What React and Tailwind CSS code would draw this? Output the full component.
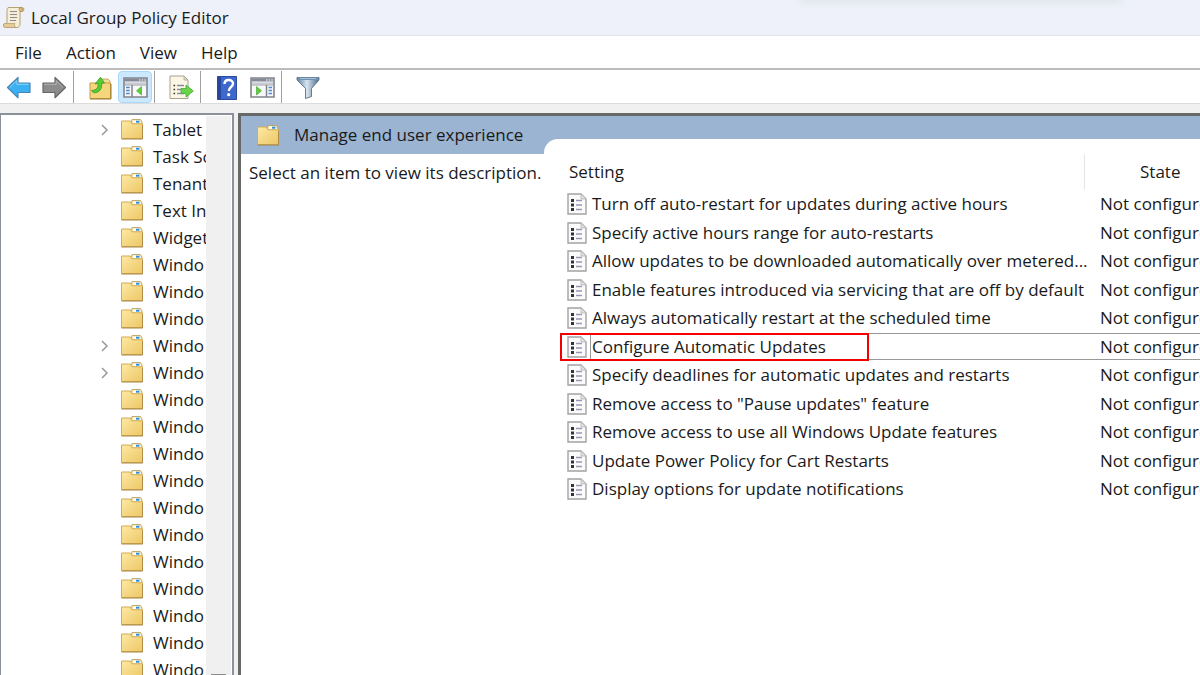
import React, { useState } from "react";
import clsx from "clsx";

const menus = ["File", "Action", "View", "Help"];

const folders = [
  { name: "Tablet", expandable: true },
  { name: "Task Sc" },
  { name: "Tenant" },
  { name: "Text Inp" },
  { name: "Widget" },
  { name: "Windo" },
  { name: "Windo" },
  { name: "Windo" },
  { name: "Windo", expandable: true },
  { name: "Windo", expandable: true },
  { name: "Windo" },
  { name: "Windo" },
  { name: "Windo" },
  { name: "Windo" },
  { name: "Windo" },
  { name: "Windo" },
  { name: "Windo" },
  { name: "Windo" },
  { name: "Windo" },
  { name: "Windo" },
  { name: "Windo" },
];

const settings = [
  "Turn off auto-restart for updates during active hours",
  "Specify active hours range for auto-restarts",
  "Allow updates to be downloaded automatically over metered...",
  "Enable features introduced via servicing that are off by default",
  "Always automatically restart at the scheduled time",
  "Configure Automatic Updates",
  "Specify deadlines for automatic updates and restarts",
  'Remove access to "Pause updates" feature',
  "Remove access to use all Windows Update features",
  "Update Power Policy for Cart Restarts",
  "Display options for update notifications",
];

const ScrollIcon = () => (
  <svg className="w-[23px] h-[23px] shrink-0" viewBox="0 0 23 23">
    <path d="M7 1.500h13.500c1.600 0 2 3.400.2 4H18v12.500c0 2-1 3.500-3 3.500H3.500C1 21.500.8 17.500 3 17.500h2V4.500C5 2.500 5.500 1.500 7 1.500z" fill="#f6edd4" stroke="#b5a078" />
    <path d="M18 5.500c-1.500-1-1.200-4 .8-4 2.600 0 3 4 1 4z" fill="#dcb878" stroke="#a88b5a" strokeWidth=".7" />
    <path d="M3 17.500h10c-1 1.500-.5 4 1.500 4H3.500C1 21.500.8 17.500 3 17.500z" fill="#e6cb92" stroke="#b5a078" strokeWidth=".8" />
    <path d="M8 5.500h7M8 8.500h7M8 11.500h7M8 14.500h6" stroke="#8b8b93" strokeWidth="1.200" />
  </svg>
);

const Folder = () => (
  <svg className="w-[22px] h-[21px] shrink-0" viewBox="0 0 22 21">
    <defs>
      <linearGradient id="folder" x1="0" y1="0" x2="1" y2="1">
        <stop offset="0" stopColor="#fde9a5" />
        <stop offset="1" stopColor="#edc765" />
      </linearGradient>
    </defs>
    <path d="M9.500 4.500l1.500-4h8.500l1.500 2.500v3H9.500z" fill="#f7e3a6" stroke="#b59a5a" strokeWidth=".8" />
    <path d="M12 1.600h7l.8 2.400H12z" fill="#fff" />
    <path d="M15 1.700h3.500v2H15z" fill="#2e8fe0" />
    <path d="M.5 2h8.800l1.700 2.800h10.500v14.700H.5z" fill="url(#folder)" stroke="#d2ab57" />
    <path d="M.5 20h21.200V6" fill="none" stroke="#a98645" strokeWidth="1" />
  </svg>
);

const Arrow = ({ back }) => (
  <svg className="w-[26px] h-[23px]" viewBox="0 0 26 23">
    {back ? (
      <path d="M1.500 11.500L12 1.500v5.500h12v9.500H12v5.200z" fill="#3bb0f3" stroke="#4a86b5" strokeWidth="1.200" strokeLinejoin="round" />
    ) : (
      <path d="M24.500 11.500L14 1.500v5.500H2v9.500h12v5.200z" fill="#8c8c8c" stroke="#666" strokeWidth="1.200" strokeLinejoin="round" />
    )}
    {back ? (
      <path d="M4 11.300l6.800-6.600v3.600h12" fill="none" stroke="#8bd5fb" />
    ) : (
      <path d="M3.200 8.300h12V4.700l6.800 6.600" fill="none" stroke="#b5b5b5" />
    )}
  </svg>
);

const UpFolder = () => (
  <svg className="w-[23px] h-[24px]" viewBox="0 0 23 24">
    <path d="M10.500 6l1.500-3h7l2 2v3H10.500z" fill="#f3dc97" stroke="#b59a5a" strokeWidth=".8" />
    <path d="M1 7h20.500v15.500H1z" fill="#f6d67c" stroke="#c59c45" />
    <path d="M1 23h21V8" fill="none" stroke="#9c7a35" />
    <path d="M2.500 14.500C8 14.500 9.500 11 9 7.500L6 8l5.500-6.800L15.500 7l-3 .2c.8 5.500-2 9.800-8 9.600z" fill="#56cc35" stroke="#379a26" strokeWidth=".8" />
  </svg>
);

const PaneIcon = ({ right }) => (
  <svg className="w-[25px] h-[21px]" viewBox="0 0 25 21">
    <path d="M1 1h23v19H1z" fill="#f8f8f8" stroke="#80858c" strokeWidth="1.600" />
    <path d="M1.500 1.500h22v3h-22z" fill="#848b98" />
    <path d="M16 3h1.500M18.700 3h1.500M21.300 3h1.500" stroke="#fff" strokeWidth="1.200" />
    <path d="M2 6.300h21" stroke="#c7ccd4" strokeWidth="1.800" />
    <path d="M2 8h21" stroke="#80858c" strokeWidth=".8" />
    {right ? (
      <>
        <path d="M16.500 8v12" stroke="#80858c" strokeWidth="1.500" />
        <path d="M18.500 10.500h3.500M18.500 13.500h3.500M18.500 16.500h3.500" stroke="#4d8bd0" strokeWidth="1.600" />
        <path d="M6.500 9.500v8.500l5-4.200z" fill="#5bd03a" stroke="#3f9f2c" strokeWidth=".6" />
      </>
    ) : (
      <>
        <path d="M9 8v12" stroke="#80858c" strokeWidth="1.500" />
        <path d="M3 10.500h3.800M3 13.500h3.800M3 16.500h3.800" stroke="#4d8bd0" strokeWidth="1.600" />
        <path d="M18.500 9.500v8.500l-5-4.200z" fill="#5bd03a" stroke="#3f9f2c" strokeWidth=".6" />
      </>
    )}
  </svg>
);

const ExportIcon = () => (
  <svg className="w-[25px] h-[25px]" viewBox="0 0 25 25">
    <path d="M1 1h14l4 4v18.500H1z" fill="#fbf7e4" stroke="#a9a38f" />
    <path d="M15 1v4h4z" fill="#dedbd0" stroke="#a9a38f" strokeWidth=".8" />
    <path d="M4.500 10.500h1.600M4.500 14.500h1.600M4.500 18.500h1.600" stroke="#333" strokeWidth="1.600" />
    <path d="M8 10.500h7M8 14.500h4M8 18.500h7" stroke="#8a86a8" strokeWidth="1.300" />
    <path d="M12 13.500h5v-3.500l7.300 6-7.300 6v-3.500h-5z" fill="#6bd44a" stroke="#45a832" strokeWidth=".8" />
  </svg>
);

const HelpIcon = () => (
  <svg className="w-[20px] h-[24px]" viewBox="0 0 20 24">
    <path d="M.5.500h19v23H.5z" fill="#3f68cc" stroke="#2c4a9c" />
    <path d="M1 1h3v22H1z" fill="#2646a0" />
    <path d="M7.500 8c0-5.200 8.500-5.200 8.500-.4 0 3.500-4.200 3.400-4.200 7.400" fill="none" stroke="#fff" strokeWidth="2.400" />
    <circle cx="11.700" cy="18.700" r="1.600" fill="#fff" />
  </svg>
);

const FilterIcon = () => (
  <svg className="w-[24px] h-[23px]" viewBox="0 0 24 23">
    <defs>
      <linearGradient id="funnel" x1="0" x2="1">
        <stop offset="0" stopColor="#5e7f9f" />
        <stop offset=".45" stopColor="#d7e5f0" />
        <stop offset="1" stopColor="#4b6987" />
      </linearGradient>
    </defs>
    <path d="M1 1.500h22v2.500l-7.500 8.500v8l-6 2v-10L1 4z" fill="url(#funnel)" stroke="#57718b" strokeWidth=".9" />
    <path d="M1.500 1.500h21v2.500h-21z" fill="#6f90ae" />
    <path d="M4 2.500h16" stroke="#a6c0d6" />
  </svg>
);

const PolicyIcon = () => (
  <svg className="w-[20px] h-[22px] shrink-0" viewBox="0 0 20 22">
    <path d="M1 1h13l5 5v15H1z" fill="#fbfbfb" stroke="#a3a3a3" strokeWidth="1.400" />
    <path d="M14 1v5h5z" fill="#e3e3e3" stroke="#b3b3b3" strokeWidth=".8" />
    <path d="M4 6h3v3H4zM4 10.500h3v3H4zM4 15h3v3H4z" fill="#33333d" />
    <path d="M9 7.500h6M9 12h6M9 16.500h6" stroke="#9a98b5" strokeWidth="1.400" />
  </svg>
);

const ToolButton = ({ label, active, children }) => (
  <button
    type="button"
    aria-label={label}
    className={clsx(
      "w-[34px] h-8 flex items-center justify-center rounded-sm border pt-px",
      active ? "bg-[#cce8ff] border-[#a8d8fa]" : "border-transparent"
    )}
  >
    {children}
  </button>
);

const Separator = () => <span className="w-px h-8 ml-px mr-2 bg-[#a0a0a0]" />;

const Toolbar = () => (
  <div className="h-[34px] shrink-0 flex items-center gap-px pl-[2px] pt-px bg-white border-b border-[#dcdcdc]">
    <ToolButton label="Back"><Arrow back /></ToolButton>
    <ToolButton label="Forward"><Arrow /></ToolButton>
    <Separator />
    <ToolButton label="Up one level"><UpFolder /></ToolButton>
    <ToolButton label="Show console tree" active><PaneIcon /></ToolButton>
    <Separator />
    <ToolButton label="Export list"><ExportIcon /></ToolButton>
    <Separator />
    <ToolButton label="Help"><HelpIcon /></ToolButton>
    <ToolButton label="Show action pane"><PaneIcon right /></ToolButton>
    <Separator />
    <ToolButton label="Filter"><FilterIcon /></ToolButton>
  </div>
);

const Tree = () => (
  <nav className="w-[234px] shrink-0 flex border-t-2 border-r-2 border-l border-[#8b919b] bg-white overflow-hidden">
    <ul className="flex-1 min-w-0 pt-px overflow-hidden">
      {folders.map((folder, i) => (
        <li key={i}>
          <button type="button" className="w-full h-[27px] flex items-center pl-[98px] whitespace-nowrap">
            <span className="w-[22px] shrink-0">
              {folder.expandable && (
                <svg className="w-3 h-3" viewBox="0 0 12 12">
                  <path d="M3 1l5 5-5 5" fill="none" stroke="#9a9a9a" strokeWidth="1.500" />
                </svg>
              )}
            </span>
            <Folder />
            <span className="pl-[10px]">{folder.name}</span>
          </button>
        </li>
      ))}
    </ul>
    <div className="w-[25px] shrink-0 mt-px mr-px bg-[#f0f0f0] flex items-end justify-center">
      <span className="w-[15px] h-px bg-[#8b8b8b]" />
    </div>
  </nav>
);

const SettingsTable = ({ selected, setSelected }) => (
  <table className="w-[676px] table-fixed border-collapse text-left whitespace-nowrap">
    <thead>
      <tr className="h-9">
        <th className="w-[524px] pl-[9px] font-normal border-r border-[#e5e5e5]">Setting</th>
        <th className="font-normal text-center">State</th>
      </tr>
    </thead>
    <tbody>
      {settings.map((name, i) => (
        <tr key={name} className="odd:h-[29px] even:h-[28px]" onClick={() => setSelected(i)}>
          <td className="relative p-0 align-top">
            <div className="flex items-center h-[27px] pl-[7px]">
              <PolicyIcon />
              <span
                className={clsx(
                  "flex-1 h-full flex items-center ml-[3px] pl-px border-y border-l",
                  selected === i ? "border-[#999]" : "border-transparent"
                )}
              >
                {name}
              </span>
            </div>
            {selected === i && (
              <span className="absolute top-0 left-0 w-[309px] h-7 border-2 border-[#f50000]" />
            )}
          </td>
          <td className="p-0 align-top">
            <div
              className={clsx(
                "h-[27px] flex items-center pl-4 border-y",
                selected === i ? "border-[#999]" : "border-transparent"
              )}
            >
              Not configured
            </div>
          </td>
        </tr>
      ))}
    </tbody>
  </table>
);

const App = () => {
  const [selected, setSelected] = useState(5);
  return (
    <div className="relative h-screen flex flex-col overflow-hidden bg-[#f0f0f0] text-[#1a1a1a] text-[17px] leading-6 font-['Open_Sans','Noto_Sans',sans-serif]">
      <header className="h-9 shrink-0 flex items-center gap-[6px] pl-[2px] bg-[#eef1f9] border-b border-[#e3e5ea]">
        <ScrollIcon />
        <h1>Local Group Policy Editor</h1>
      </header>
      <span className="absolute -top-1 left-[800px] w-[322px] h-1 rounded shadow-[0_1px_8px_#cfd8da]" />
      <div className="h-[34px] shrink-0 flex items-center gap-6 pl-[15px] pt-px bg-white border-b-2 border-[#bcbcbc]">
        {menus.map((menu) => (
          <button key={menu} type="button">{menu}</button>
        ))}
      </div>
      <Toolbar />
      <div className="flex-1 min-h-0 flex gap-1 pt-[9px]">
        <Tree />
        <main className="flex-1 min-w-0 flex flex-col border-t-[3px] border-l-[3px] border-[#686868] bg-white">
          <div className="h-[38px] shrink-0 flex items-end bg-[#9ab4d2]">
            <div className="w-[303px] h-full shrink-0 flex items-center gap-[15px] pl-4">
              <Folder />
              <h2>Manage end user experience</h2>
            </div>
            <div className="flex-1 h-[15px] bg-white rounded-tl-[14px]" />
          </div>
          <div className="flex-1 min-h-0 flex overflow-hidden">
            <p className="w-[319px] shrink-0 pl-2 pt-[7px]">Select an item to view its description.</p>
            <div className="flex-1 min-w-0 overflow-hidden">
              <SettingsTable selected={selected} setSelected={setSelected} />
            </div>
          </div>
        </main>
      </div>
    </div>
  );
};

export default App;
